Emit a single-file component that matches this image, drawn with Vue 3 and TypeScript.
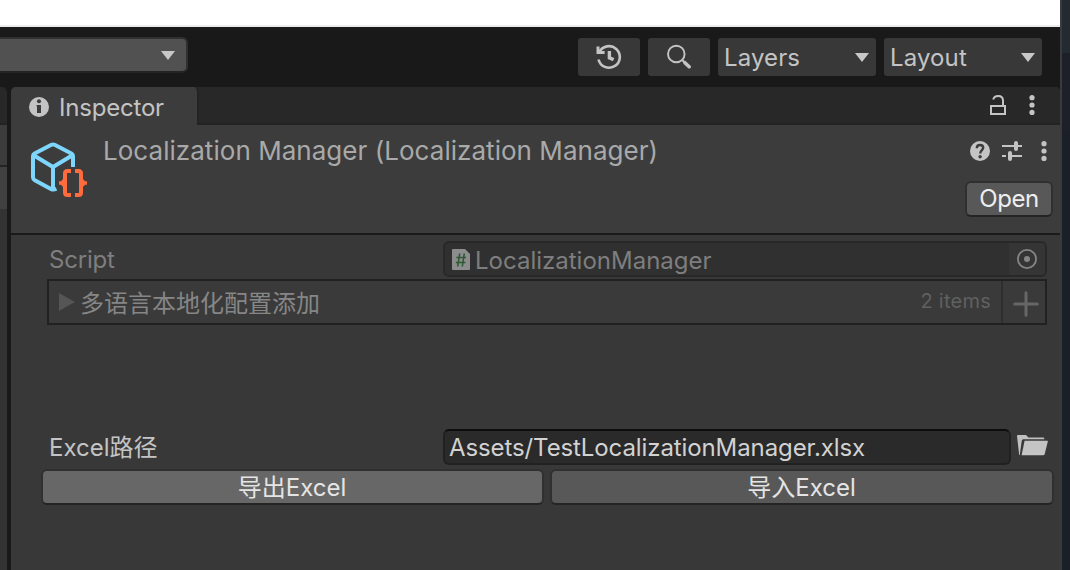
<script setup lang="ts">
import { ref } from 'vue'

const menus = ['Layers', 'Layout']
const component = 'Localization Manager (Localization Manager)'
const scriptName = 'LocalizationManager'
const listLabel = '多语言本地化配置添加'
const itemCount = ref(2)
const excelPath = ref('Assets/TestLocalizationManager.xlsx')
</script>

<template>
  <div class="window">
    <div class="editor">
      <div class="titlebar"></div>
      <header class="toolbar">
        <div class="search-drop">
          <svg width="14" height="9" viewBox="0 0 14 9"><path d="M0 0H14L7 9Z" fill="#c8c8c8" /></svg>
        </div>
        <div class="tools">
          <button class="tool icon">
            <svg width="26" height="26" viewBox="0 0 26 26" fill="none" stroke="#c4c4c4">
              <path d="M3.2 8.4A10.8 10.8 0 1 1 2.5 15.5" stroke-width="2.6" />
              <path d="M2 2.4V8.6H8.6" stroke-width="3" />
              <path d="M13.4 7V13.8L17.6 15.6" stroke-width="3.4" />
            </svg>
          </button>
          <button class="tool icon">
            <svg width="26" height="26" viewBox="0 0 26 26" fill="none" stroke="#c4c4c4">
              <circle cx="10.3" cy="10" r="8.3" stroke-width="1.9" />
              <path d="M16.4 16.2L18.4 18.2" stroke-width="2" />
              <path d="M18.9 18.7L23.2 22.7" stroke-width="3.6" stroke-linecap="round" />
            </svg>
          </button>
          <button v-for="m in menus" :key="m" class="tool menu">
            <span>{{ m }}</span>
            <svg width="14" height="9" viewBox="0 0 14 9"><path d="M0 0H14L7 9Z" fill="#c8c8c8" /></svg>
          </button>
        </div>
      </header>

      <div class="docks">
        <aside class="neighbour">
          <div class="n-tabs"></div>
          <div class="n-bar"></div>
          <div class="n-row"></div>
          <div class="n-rest"></div>
        </aside>

        <section class="inspector">
          <div class="tabs">
            <div class="tab">
              <svg width="20" height="20" viewBox="0 0 20 20">
                <circle cx="10" cy="10" r="10" fill="#c4c4c4" />
                <circle cx="10" cy="4.2" r="2" fill="#3c3c3c" />
                <path d="M7.6 8H12V16H8V9.5H7.6Z" fill="#3c3c3c" />
              </svg>
              <span>Inspector</span>
            </div>
            <div class="tab-actions">
              <svg width="16" height="20" viewBox="0 0 16 20" fill="none" stroke="#c4c4c4" stroke-width="2">
                <rect x="1" y="11" width="14" height="8" />
                <path d="M3.2 4.6C3.8 2.2 5.4 1 8.2 1C11.4 1 13 2.9 13 5.6V11" />
              </svg>
              <svg width="6" height="20" viewBox="0 0 6 20" fill="#c4c4c4">
                <circle cx="3" cy="2.7" r="2.6" /><circle cx="3" cy="10" r="2.6" /><circle cx="3" cy="17.4" r="2.6" />
              </svg>
            </div>
          </div>

          <div class="header">
            <svg class="asset" width="58" height="58" viewBox="0 0 58 58" fill="none">
              <g stroke="#7fd6fd" stroke-width="4" stroke-linejoin="round">
                <path d="M43 26V15Q43 13.4 41.4 12.5L24.6 3.8Q23 3 21.4 3.8L4.6 12.5Q3 13.4 3 15V36.2Q3 38.3 4.8 39.3L21.4 48.2Q23.4 49.2 26.4 47.8" />
                <path d="M3.6 14.2L23 26L42.4 14.2M23 26V48.5" />
              </g>
              <g stroke="#ff6b3d" stroke-width="4">
                <path d="M41 30H37.5Q35 30 35 32.5V51.5Q35 54 37.5 54H41" />
                <path d="M45 30H48.5Q51 30 51 32.5V51.5Q51 54 48.5 54H45" />
              </g>
              <path d="M29 40.2H31L33.5 37.5H36V46.5H33.5L31 43.8H29ZM57 40.2H55L52.5 37.5H50V46.5H52.5L55 43.8H57Z" fill="#ff6b3d" />
            </svg>
            <h1>{{ component }}</h1>
            <div class="header-side">
              <div class="header-icons">
                <svg width="20" height="20" viewBox="0 0 20 20">
                  <circle cx="10" cy="10" r="10" fill="#c4c4c4" />
                  <path d="M6.8 7.2C6.8 5 8.1 4 10 4C12 4 13.2 5.1 13.2 6.8C13.2 9 10.2 9.2 10.2 12.4" fill="none" stroke="#3c3c3c" stroke-width="2.4" />
                  <circle cx="10.1" cy="15.7" r="1.7" fill="#3c3c3c" />
                </svg>
                <svg width="20" height="20" viewBox="0 0 20 20" fill="none" stroke="#c4c4c4">
                  <path d="M0 5H14M16 5H20M0 15H4M8 15H20" stroke-width="2" />
                  <path d="M14 2V8M8 12V18" stroke-width="4" stroke-linecap="round" />
                </svg>
                <svg width="6" height="20" viewBox="0 0 6 20" fill="#c4c4c4">
                  <circle cx="3" cy="2.7" r="2.6" /><circle cx="3" cy="10" r="2.6" /><circle cx="3" cy="17.4" r="2.6" />
                </svg>
              </div>
              <button class="btn open">Open</button>
            </div>
          </div>

          <div class="body">
            <div class="field-row disabled">
              <label>Script</label>
              <div class="object-field">
                <svg width="18" height="21" viewBox="0 0 18 21">
                  <path d="M1 0H13L18 5V20Q18 21 17 21H1Q0 21 0 20V1Q0 0 1 0Z" fill="#8d8d8d" />
                  <path d="M7.7 4.5L5.7 17.5M12.3 4.5L10.3 17.5M4.3 8.5H14M3.8 13.5H13.4" stroke="#2f5a33" stroke-width="1.6" />
                </svg>
                <span>{{ scriptName }}</span>
                <div class="picker">
                  <svg width="20" height="20" viewBox="0 0 20 20">
                    <circle cx="10" cy="10" r="9.1" fill="none" stroke="#868686" stroke-width="1.8" />
                    <circle cx="10" cy="10" r="3" fill="#868686" />
                  </svg>
                </div>
              </div>
            </div>

            <div class="list">
              <svg width="16" height="18" viewBox="0 0 16 18"><path d="M0 0L16 9L0 18Z" fill="#555" /></svg>
              <span class="list-label">{{ listLabel }}</span>
              <span class="count">{{ itemCount }} items</span>
              <div class="add">
                <svg width="26" height="26" viewBox="0 0 26 26" stroke="#666" stroke-width="3" stroke-linecap="round">
                  <path d="M1.7 13H24.3M13 1.7V24.3" />
                </svg>
              </div>
            </div>

            <div class="field-row path-row">
              <label>Excel路径</label>
              <div class="text-field">{{ excelPath }}</div>
              <svg class="folder" width="31" height="22" viewBox="0 0 31 22">
                <path d="M0 1Q0 0 1 0H9L11.5 2.4H26.4Q27.4 2.4 27.4 4.3H6.2Q4.9 4.3 4.7 6L2.8 20H2.2Z" fill="#c0c0c0" />
                <path d="M7.6 5.8H30.4Q31 5.8 30.8 6.6L27.6 19.2Q27.3 20.3 26 20.3H4.6Z" fill="#c4c4c4" />
              </svg>
            </div>

            <div class="buttons">
              <button class="btn hover">导出Excel</button>
              <button class="btn">导入Excel</button>
            </div>
          </div>
        </section>
      </div>
    </div>
    <div class="desktop"></div>
  </div>
</template>

<style>
body {
  background: #191919;
}
</style>

<style scoped>
* {
  box-sizing: border-box;
}
svg {
  display: block;
  flex: none;
}
button {
  font: inherit;
  color: inherit;
  border: 0;
  padding: 0;
}
.window {
  width: 1070px;
  height: 570px;
  display: flex;
  overflow: hidden;
  font-family: Inter, "Noto Sans CJK SC", sans-serif;
  font-size: 24px;
  line-height: 30px;
  color: #c4c4c4;
  white-space: nowrap;
}
.editor {
  width: 1060px;
  display: flex;
  flex-direction: column;
  background: #191919;
}
.desktop {
  flex: 1;
  border-left: 2px solid #3a3a3d;
  background: linear-gradient(#232b31 0 53px, #1e2029 53px 130px, #1b2028 130px);
}
.titlebar {
  height: 27px;
  background: #fff;
  border-bottom: 2px solid #eaecee;
}
.toolbar {
  height: 60px;
  display: flex;
  justify-content: space-between;
  align-items: flex-start;
  padding: 10px 18px 0 0;
}
.search-drop {
  width: 188px;
  height: 36px;
  background: #515151;
  border: 2px solid #303030;
  border-left: 0;
  border-bottom-color: #242424;
  border-radius: 0 6px 6px 0;
  display: flex;
  justify-content: flex-end;
  padding: 12px 11px 0 0;
}
.tools {
  display: flex;
  gap: 8px;
  padding-top: 1px;
}
.tool {
  height: 38px;
  background: #383838;
  border-radius: 3px;
  display: flex;
  align-items: center;
}
.icon {
  width: 62px;
  justify-content: center;
}
.menu {
  width: 158px;
  justify-content: space-between;
  padding: 0 7px 0 6px;
  letter-spacing: 0.12px;
}
.menu span {
  padding-top: 2px;
}
.docks {
  flex: 1;
  display: flex;
  gap: 4px;
}
.neighbour {
  width: 7px;
  display: flex;
  flex-direction: column;
}
.n-tabs {
  height: 38px;
  background: #282828;
  border-bottom: 2px solid #232323;
  border-top-right-radius: 5px;
}
.n-bar {
  height: 42px;
  background: #3c3c3c;
  border-bottom: 2px solid #232323;
}
.n-row {
  height: 42px;
  background: #414141;
}
.n-rest {
  flex: 1;
  background: #333;
}
.inspector {
  flex: 1;
  display: flex;
  flex-direction: column;
  background: #383838;
  border-radius: 5px 5px 0 0;
  overflow: hidden;
}
.tabs {
  height: 38px;
  display: flex;
  justify-content: space-between;
  background: linear-gradient(#282828 36px, #232323 36px);
}
.tab {
  width: 188px;
  display: flex;
  align-items: center;
  gap: 10px;
  padding: 3px 0 0 18px;
  background: #3c3c3c;
  border-right: 2px solid #232323;
  border-top-right-radius: 5px;
  letter-spacing: -0.2px;
}
.tab svg {
  margin-top: -1px;
}
.tab-actions {
  display: flex;
  gap: 23px;
  padding: 8px 25px 0 0;
}
.header {
  height: 110px;
  display: flex;
  background: #3c3c3c;
  border-bottom: 2px solid #1a1a1a;
  padding: 0 8px 0 19px;
}
.asset {
  margin-top: 16px;
}
h1 {
  flex: 1;
  margin: 11px 0 0 15px;
  font-size: 26px;
  font-weight: 400;
  letter-spacing: 0.04px;
  color: #a9a9a9;
}
.header-side {
  display: flex;
  flex-direction: column;
  align-items: flex-end;
  padding-top: 16px;
}
.header-icons {
  display: flex;
  padding-right: 5px;
  gap: 12px;
}
.header-icons svg:last-child {
  margin-left: 7px;
}
.btn {
  height: 36px;
  background: #585858;
  border: 2px solid #303030;
  border-bottom-color: #242424;
  border-radius: 6px;
  color: #e4e4e4;
}
.open {
  width: 88px;
  margin: 20px -1px 0 0;
  color: #eee;
  letter-spacing: -0.4px;
}
.body {
  padding: 6px 8px 0 30px;
}
.field-row {
  display: flex;
  height: 36px;
  padding-left: 8px;
}
.field-row label {
  width: 394px;
  padding-top: 4px;
}
.disabled {
  color: #7e7e7e;
}
.disabled label {
  letter-spacing: -0.2px;
}
.object-field {
  width: 604px;
  display: flex;
  align-items: center;
  background: #303030;
  border: 2px solid #282828;
  border-radius: 6px;
  padding-left: 7px;
}
.object-field span {
  flex: 1;
  padding: 4px 0 0 5px;
}
.picker {
  width: 36px;
  height: 32px;
  background: #353535;
  border-radius: 0 4px 4px 0;
  display: flex;
  align-items: center;
  padding-left: 8px;
}
.list {
  width: 1000px;
  height: 46px;
  margin: 2px 0 0 6px;
  display: flex;
  align-items: center;
  background: #3a3a3a;
  border: 2px solid #212121;
  padding-left: 10px;
  color: #868686;
}
.list-label {
  flex: 1;
  padding-left: 5px;
  padding-top: 3px;
}
.count {
  font-size: 20px;
  letter-spacing: 0.25px;
  color: #606060;
  padding: 0 10px 3px 0;
}
.add {
  width: 44px;
  height: 42px;
  border-left: 2px solid #2e2e2e;
  display: flex;
  align-items: center;
  padding: 3px 0 0 10px;
}
.path-row {
  margin-top: 104px;
}
.text-field {
  width: 568px;
  background: #2a2a2a;
  border: 2px solid #212121;
  border-top-color: #0d0d0d;
  border-radius: 6px;
  padding: 2px 0 0 4px;
  color: #d2d2d2;
  letter-spacing: -0.1px;
}
.folder {
  margin: 6px 0 0 6px;
}
.buttons {
  display: flex;
  gap: 6px;
  margin: 4px -1px 0 0;
}
.buttons .btn {
  flex: none;
  width: 503px;
  padding: 2px 1px 0 0;
}
.buttons .btn:last-child {
  width: 504px;
}
.btn.hover {
  background: #676767;
}
</style>
